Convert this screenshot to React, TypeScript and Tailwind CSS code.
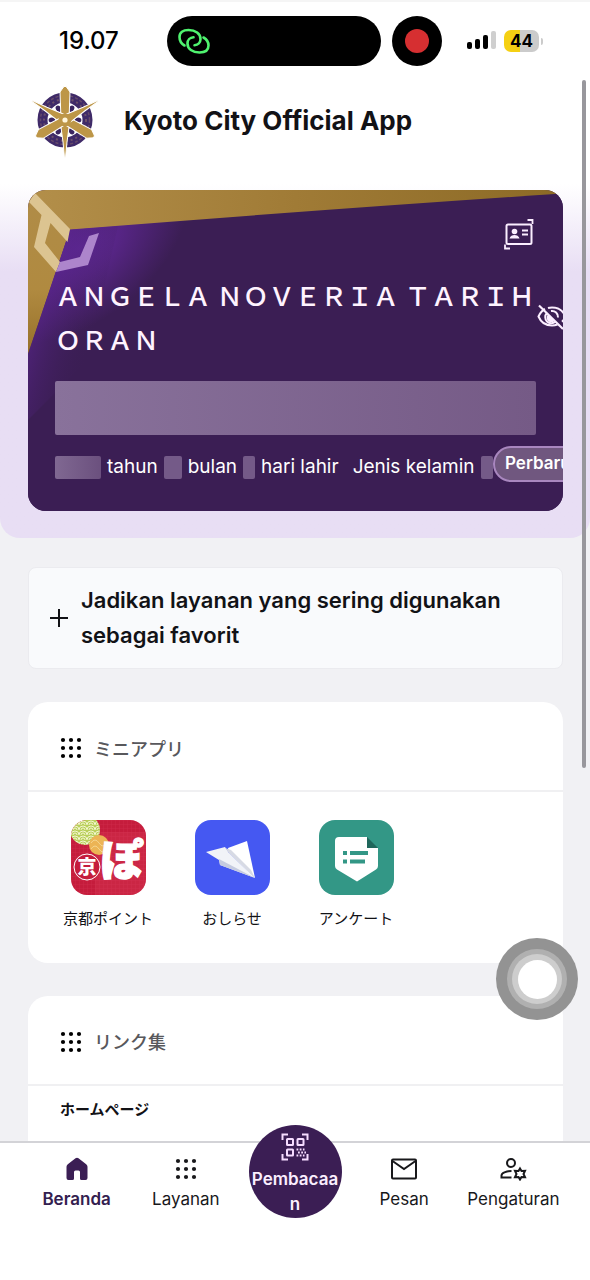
import type { ReactNode } from 'react';

// Resident names are printed with full-width Latin capitals
const toFullWidth = (text: string) =>
  text.replace(/[A-Z]/g, (c) => String.fromCharCode(c.charCodeAt(0) + 0xfee0));

function DotGrid() {
  const steps = [3, 11, 19];
  return (
    <svg viewBox="0 0 22 22" className="size-[22px] shrink-0" fill="currentColor" aria-hidden="true">
      {steps.map((y) => steps.map((x) => <circle key={`${x}-${y}`} cx={x} cy={y} r="2.1" />))}
    </svg>
  );
}

function Emblem() {
  return (
    <svg viewBox="0 0 80 80" className="size-20 shrink-0" aria-hidden="true">
      <circle cx="40" cy="40" r="22.5" fill="none" stroke="#3f2a68" strokeWidth="10" />
      <circle cx="40" cy="40" r="21" fill="none" stroke="#8a6a6c" strokeWidth="2" strokeDasharray="2 3" opacity="0.6" />
      <circle cx="40" cy="40" r="24.5" fill="none" stroke="#8a6a6c" strokeWidth="1.5" strokeDasharray="3 2" opacity="0.5" />
      {[0, 60, 120, 180, 240, 300].map((a) => (
        <ellipse key={a} cx="53" cy="40" rx="3.4" ry="2.6" fill="#3a2560" transform={`rotate(${a} 40 40)`} />
      ))}
      {[0, 120, 240].map((a) => (
        <g key={a} transform={`rotate(${a} 40 40)`} fill="#bd9647" stroke="#fff" strokeWidth="1">
          <path d="M36 40 35 12 38.5 7Q40 5.500 41.500 7L45 12 44 40Z" />
          <path d="M35 40 38 62 39.500 78H40.500L42 62 45 40Z" />
        </g>
      ))}
      <circle cx="40" cy="40" r="6.5" fill="#bd9647" />
      <circle cx="40" cy="40" r="2.6" fill="#fff6dc" />
    </svg>
  );
}

function StatusBar() {
  return (
    <div className="flex h-20 items-center border-t-2 border-[#f5f5f5] pl-[59px] text-black">
      <span className="w-[108px] text-[24px] font-medium">19.07</span>
      <div className="flex h-[50px] w-[214px] items-center rounded-full bg-black pl-[10px]">
        <svg viewBox="0 0 34 30" className="h-[30px] w-[34px]" fill="none" stroke="#4ff36f" strokeWidth="2.6" strokeLinecap="round" aria-hidden="true">
          <path d="M7.500 19.500C4 17.500 2.500 14 2.500 11 2.500 6.500 6 4 11.500 4 18.500 4 23.500 7.500 23.500 13c0 3.500-2.500 6-6 6.200" />
          <path d="M26.500 11.500c3.500 2 5 5 5 8 0 4.500-3.500 7-9 7C15.500 26.500 10.500 23 10.500 17.500c0-3.500 2.500-6 6-6.200" />
        </svg>
      </div>
      <div className="ml-[11px] grid size-[50px] place-items-center rounded-full bg-black">
        <span className="size-6 rounded-full bg-[#d62f31]" />
      </div>
      <div className="ml-[25px] flex h-4 items-end gap-[3px]">
        <span className="h-[7px] w-[5px] rounded-xs bg-black" />
        <span className="h-[10px] w-[5px] rounded-xs bg-black" />
        <span className="h-[14px] w-[5px] rounded-xs bg-black" />
        <span className="h-[18px] w-[5px] rounded-xs bg-[#cfcfcf]" />
      </div>
      <div className="ml-[8px] flex items-center gap-[2px]">
        <span className="grid h-[22px] w-[35px] place-items-center rounded-[7px] bg-linear-to-r from-[#f5d013] from-45% to-[#cbcbcb] to-45% text-[17px] leading-none font-bold">
          44
        </span>
        <span className="h-[7px] w-[2px] rounded-r bg-[#cbcbcb]" />
      </div>
    </div>
  );
}

function CardArtwork() {
  return (
    <svg viewBox="0 0 535 321" preserveAspectRatio="none" className="absolute inset-0 size-full" aria-hidden="true">
      <defs>
        <linearGradient id="goldTop" x1="0" y1="0" x2="1" y2="0">
          <stop offset="0" stopColor="#b38f4a" />
          <stop offset="0.5" stopColor="#a07b36" />
          <stop offset="1" stopColor="#8c6a26" />
        </linearGradient>
        <linearGradient id="goldSide" x1="0" y1="0" x2="0" y2="1">
          <stop offset="0" stopColor="#b08c48" />
          <stop offset="0.6" stopColor="#b08a40" />
          <stop offset="1" stopColor="#96702a" />
        </linearGradient>
        <radialGradient id="violet" gradientUnits="userSpaceOnUse" cx="0" cy="0" r="1" gradientTransform="translate(52 58) rotate(-38) scale(125 72)">
          <stop offset="0" stopColor="#61289a" />
          <stop offset="0.35" stopColor="#572586" />
          <stop offset="1" stopColor="#3b1e54" />
        </radialGradient>
        <linearGradient id="violetEdge" gradientUnits="userSpaceOnUse" x1="0" y1="150" x2="60" y2="170">
          <stop offset="0" stopColor="#5b2590" stopOpacity="0.6" />
          <stop offset="1" stopColor="#3b1e54" stopOpacity="0" />
        </linearGradient>
      </defs>
      <path d="M0 0H535V4L42 40Z" fill="url(#goldTop)" />
      <path d="M0 0 42 40 0 166Z" fill="url(#goldSide)" />
      <path d="M42 39.500 Q300 19 535 3.500V321H0V164Z" fill="url(#violet)" />
      <path d="M42 40 90 36 60 170 0 230V164Z" fill="url(#violetEdge)" />
      <path d="M1 12 7 3 42 39 39.500 52 22.500 33 17 53 32 72 28 82 6 57 13.500 25Z" fill="#dcc491" />
      <path d="M32 72 52 67 61 46 71 43 60 75 28 82Z" fill="#ad85cc" />
    </svg>
  );
}

function ResidentCard() {
  return (
    <section className="relative overflow-hidden rounded-[18px] bg-[#3b1e54] px-[27px] pt-[83px] pb-8 text-white">
      <CardArtwork />
      <button aria-label="Kartu" className="absolute top-7 right-[29px]">
        <svg viewBox="0 0 30 32" className="h-8 w-[30px]" fill="none" stroke="#fbeeff" strokeWidth="2" aria-hidden="true">
          <rect x="2.500" y="6.500" width="25" height="19.500" rx="1.500" />
          <path d="M23.500 2h5v4M1 26.500v4h5" strokeWidth="1.800" />
          <circle cx="10.500" cy="13.500" r="2.800" fill="#fbeeff" stroke="none" />
          <path d="M5.500 20.500c.5-2.500 3-3.500 5-3.500s4.500 1 5 3.500z" fill="#fbeeff" stroke="none" />
          <path d="M18 12.500h6M18 16.500h6" />
        </svg>
      </button>
      <h2 className="relative font-['Noto_Sans_CJK_JP',sans-serif] text-[26px] leading-[44px] font-medium text-[#fff3ff]">
        {toFullWidth('ANGELA NOVERIA TARIHORAN')}
      </h2>
      <button aria-label="Sembunyikan" className="absolute top-[113px] -right-1">
        <svg viewBox="0 0 30 28" className="h-7 w-[30px]" fill="none" stroke="#fbeeff" strokeWidth="2" aria-hidden="true">
          <path d="M8 6C5 7.500 3 10 1.500 13.500 4 19.500 9 22.500 15 22.500c2 0 4-.4 5.500-1" />
          <path d="M11 5c1.200-.4 2.500-.5 4-.5 6 0 11 3 13.500 9-.8 2-2 3.800-3.500 5.200" />
          <path d="M10 10a6 6 0 0 0 8.500 8.500" />
          <path d="M14 8a6 6 0 0 1 7 6.500" />
          <path d="M11 11.500 17.500 18a4 4 0 0 1-6.500-6.500z" fill="#fbeeff" stroke="none" />
          <path d="M2 2.500 26 26" strokeWidth="2.200" />
        </svg>
      </button>
      <div className="relative mt-5 h-[54px] rounded-xs bg-linear-to-r from-[#89729b] to-[#755a86]" />
      <p className="relative mt-5 flex h-6 items-center gap-[6px] text-[19px] whitespace-nowrap">
        <span className="h-[23px] w-[46px] shrink-0 rounded-xs bg-linear-to-r from-[#806892] to-[#6b507e]" />
        tahun
        <span className="h-[23px] w-[18px] shrink-0 rounded-xs bg-[#745a88]" />
        bulan
        <span className="h-[23px] w-3 shrink-0 rounded-xs bg-[#745a88]" />
        hari lahir
        <span className="ml-2">Jenis kelamin</span>
        <span className="h-[23px] w-3 shrink-0 rounded-xs bg-[#745a88]" />
      </p>
      <button className="absolute -right-7 bottom-[29px] h-9 w-[98px] rounded-full border-2 border-[#a987bf] bg-[#70577f] pl-[10px] text-left text-[17px] font-semibold whitespace-nowrap">
        Perbarui
      </button>
    </section>
  );
}

function Panel({ title, children }: { title: string; children: ReactNode }) {
  return (
    <section className="mt-[33px] rounded-[20px] bg-white">
      <h2 className="flex h-[90px] items-center gap-3 border-b-2 border-[#f0f0f2] px-8 pt-1 font-['Noto_Sans_CJK_JP',sans-serif] text-[18px] font-medium text-[#58585c]">
        <span className="text-black"><DotGrid /></span>
        {title}
      </h2>
      {children}
    </section>
  );
}

function PointIcon() {
  return (
    <svg viewBox="0 0 75 75" className="size-[75px] rounded-2xl" aria-hidden="true">
      <defs>
        <pattern id="scales" width="8" height="5" patternUnits="userSpaceOnUse">
          <rect width="8" height="5" fill="#b9cf5b" />
          <path d="M0 5a4 4 0 0 1 8 0M2 5a2 2 0 0 1 4 0" fill="none" stroke="#f4f7cf" strokeWidth="1" />
        </pattern>
        <pattern id="weave" width="4" height="4" patternUnits="userSpaceOnUse">
          <path d="M0 0h4M0 0v4" stroke="#e34a67" strokeWidth="0.6" opacity="0.4" />
        </pattern>
      </defs>
      <rect width="75" height="75" fill="#c51c3c" />
      <rect width="75" height="75" fill="url(#weave)" />
      <path d="M30 12H75V75H24V40Z" fill="#d93f5a" opacity="0.3" />
      <circle cx="14" cy="10" r="15" fill="url(#scales)" />
      <circle cx="28" cy="25" r="10" fill="#ecb455" />
      <path d="M20 23q4-6 8 0t8 0M20 29q4-6 8 0t8 0" fill="none" stroke="#f5d58e" />
      <circle cx="16" cy="47" r="13" fill="#c51c3c" stroke="#fff" strokeWidth="1" />
      <text x="16" y="54" textAnchor="middle" fontSize="19" fontWeight="900" fill="#fff" className="font-['Noto_Sans_CJK_JP',sans-serif]">京</text>
      <text x="51" y="56" textAnchor="middle" fontSize="43" fontWeight="900" fill="#fff" stroke="#fff" strokeWidth="1.500" className="font-['Noto_Sans_CJK_JP',sans-serif]">ぽ</text>
    </svg>
  );
}

function NewsIcon() {
  return (
    <svg viewBox="0 0 75 75" className="size-[75px] rounded-2xl" aria-hidden="true">
      <rect width="75" height="75" fill="#4558f2" />
      <path d="M11 32 30 27 34 33 60 58 25 45 24 40Z" fill="#f1f3f8" />
      <path d="M24 39 60 58 25 45Z" fill="#c5cbe0" />
      <path d="M33 28 52 21 60 58 34 33Z" fill="#fff" />
      <path d="M30 28 34 33 60 58 56 50 36 30Z" fill="#d7dae4" />
    </svg>
  );
}

function SurveyIcon() {
  return (
    <svg viewBox="0 0 75 75" className="size-[75px] rounded-2xl" aria-hidden="true">
      <rect width="75" height="75" fill="#339786" />
      <path d="M20 17H48V28H59V46Q59 48 57 49.500L38 61.500 18 49.500Q16 48 16 46V21Q16 17 20 17Z" fill="#fff" />
      <path d="M48 17 59 28H48Z" fill="#1f665b" />
      <path d="M24 31h4v4h-4zM31 31h18v4H31zM24 39.500h4v4h-4zM31 39.500h15v4H31z" fill="#339786" />
    </svg>
  );
}

const miniApps = [
  { label: '京都ポイント', icon: <PointIcon /> },
  { label: 'おしらせ', icon: <NewsIcon /> },
  { label: 'アンケート', icon: <SurveyIcon /> },
];

function NavItem({ label, active, children }: { label: string; active?: boolean; children: ReactNode }) {
  return (
    <a
      href="#"
      className={`flex flex-1 flex-col items-center gap-[5px] pt-[13px] text-[17px] ${active ? 'font-semibold text-[#33204f]' : 'text-[#18181b]'}`}
    >
      <span className="grid h-[26px] place-items-center">{children}</span>
      {label}
    </a>
  );
}

function BottomNav() {
  return (
    <nav className="relative z-10 flex h-[139px] shrink-0 border-t-2 border-[#d3d3d7] bg-white px-[22px]">
      <NavItem label="Beranda" active>
        <svg viewBox="0 0 22 24" className="h-6 w-[22px]" fill="#3b1e54" aria-hidden="true">
          <path d="M9.500 1.300a2.400 2.400 0 0 1 3 0l7.700 5.900q1.300 1 1.300 2.500V21q0 2-2 2H15.500Q14 23 14 21.500V15q0-1.500-1.500-1.500h-3Q8 13.500 8 15v6.500Q8 23 6.500 23H2.500q-2 0-2-2V9.700q0-1.500 1.300-2.500z" />
        </svg>
      </NavItem>
      <NavItem label="Layanan"><DotGrid /></NavItem>
      <div className="flex flex-1 justify-center">
        <a
          href="#"
          className="-mt-[18px] flex size-[93px] shrink-0 flex-col items-center rounded-full bg-[#3b1e54] px-[3px] pt-2 text-center text-[17px] leading-[25px] font-semibold break-all text-[#fbeeff]"
        >
          <svg viewBox="0 0 28 28" className="mb-[6px] size-[28px] shrink-0" fill="none" stroke="#f6dcff" strokeWidth="2" aria-hidden="true">
            <path d="M1.500 7V1.500H7M21 1.500h5.500V7M1.500 21v5.500H7M26.500 21v5.500H21" />
            <rect x="6" y="6" width="6" height="6" rx="0.500" />
            <rect x="16.500" y="6" width="6" height="6" rx="0.500" />
            <rect x="6" y="16.500" width="6" height="6" rx="0.500" />
            <path d="M15.500 16.500h8M17 19.500h8M15.500 22.500h8" strokeDasharray="1.800 1.400" strokeWidth="2" />
          </svg>
          Pembacaan
        </a>
      </div>
      <NavItem label="Pesan">
        <svg viewBox="0 0 28 22" className="h-[22px] w-7" fill="none" stroke="currentColor" strokeWidth="2" aria-hidden="true">
          <rect x="2" y="1.500" width="24" height="19" rx="1" />
          <path d="M2.500 3 14 11 25.500 3" />
        </svg>
      </NavItem>
      <NavItem label="Pengaturan">
        <svg viewBox="0 0 28 24" className="h-6 w-7" fill="none" stroke="currentColor" strokeWidth="2" aria-hidden="true">
          <circle cx="12" cy="6" r="4" />
          <path d="M12.500 14C7 14 2.500 16 2.500 18.500V20.500H12.500" />
          <path d="M21 11.500 22.500 14 26 13.800 24.500 17 26 20.200 22.500 20 21 22.500 19.500 20 16 20.200 17.500 17 16 13.800 19.500 14Z" />
        </svg>
      </NavItem>
    </nav>
  );
}

export default function App() {
  return (
    <div className="relative flex h-screen flex-col overflow-hidden bg-[#f1f1f4] font-[Inter,'Noto_Sans_CJK_JP',sans-serif] text-[#121216]">
      <header className="shrink-0 bg-white">
        <StatusBar />
        <div className="flex h-20 items-center gap-[19px] pl-[25px]">
          <Emblem />
          <h1 className="text-[26px] font-bold">Kyoto City Official App</h1>
        </div>
      </header>

      <main className="min-h-0 flex-1 overflow-hidden">
        <div className="rounded-b-[20px] bg-linear-to-b from-white from-[24px] to-[#e8def4] to-[112px] pt-[30px] pr-[27px] pb-[27px] pl-7">
          <ResidentCard />
        </div>

        <div className="pr-[27px] pl-7">
          <button className="mt-[29px] flex w-full items-center gap-3 rounded-lg border border-[#ebebef] bg-[#f9fafc] px-5 py-[15px] text-left text-[22px] leading-[35px] font-semibold">
            <svg viewBox="0 0 20 20" className="size-5 shrink-0" stroke="currentColor" strokeWidth="2" aria-hidden="true">
              <path d="M10 1v18M1 10h18" />
            </svg>
            Jadikan layanan yang sering digunakan sebagai favorit
          </button>

          <Panel title="ミニアプリ">
            <ul className="flex pt-7 pb-[33px] pl-[18px] font-['Noto_Sans_CJK_JP',sans-serif] text-[15px]">
              {miniApps.map((app) => (
                <li key={app.label} className="w-[124px]">
                  <a href="#" className="flex flex-col items-center gap-3">
                    {app.icon}
                    {app.label}
                  </a>
                </li>
              ))}
            </ul>
          </Panel>

          <Panel title="リンク集">
            <h3 className="px-8 pt-3 pb-12 font-['Noto_Sans_CJK_JP',sans-serif] text-[15px] font-bold">ホームページ</h3>
          </Panel>
        </div>
      </main>

      <BottomNav />

      {/* Scroll indicator */}
      <div className="absolute top-20 right-1 h-[688px] w-1 rounded-full bg-[#98979c]" />

      {/* Floating touch button */}
      <button
        aria-label="AssistiveTouch"
        className="absolute right-3 bottom-[260px] z-20 grid size-[82px] place-items-center rounded-full bg-[#939393]"
      >
        <span className="grid size-[60px] place-items-center rounded-full bg-[#b0b0b0]">
          <span className="grid size-[50px] place-items-center rounded-full bg-[#cdcdcd]">
            <span className="size-[39px] rounded-full bg-white" />
          </span>
        </span>
      </button>
    </div>
  );
}
